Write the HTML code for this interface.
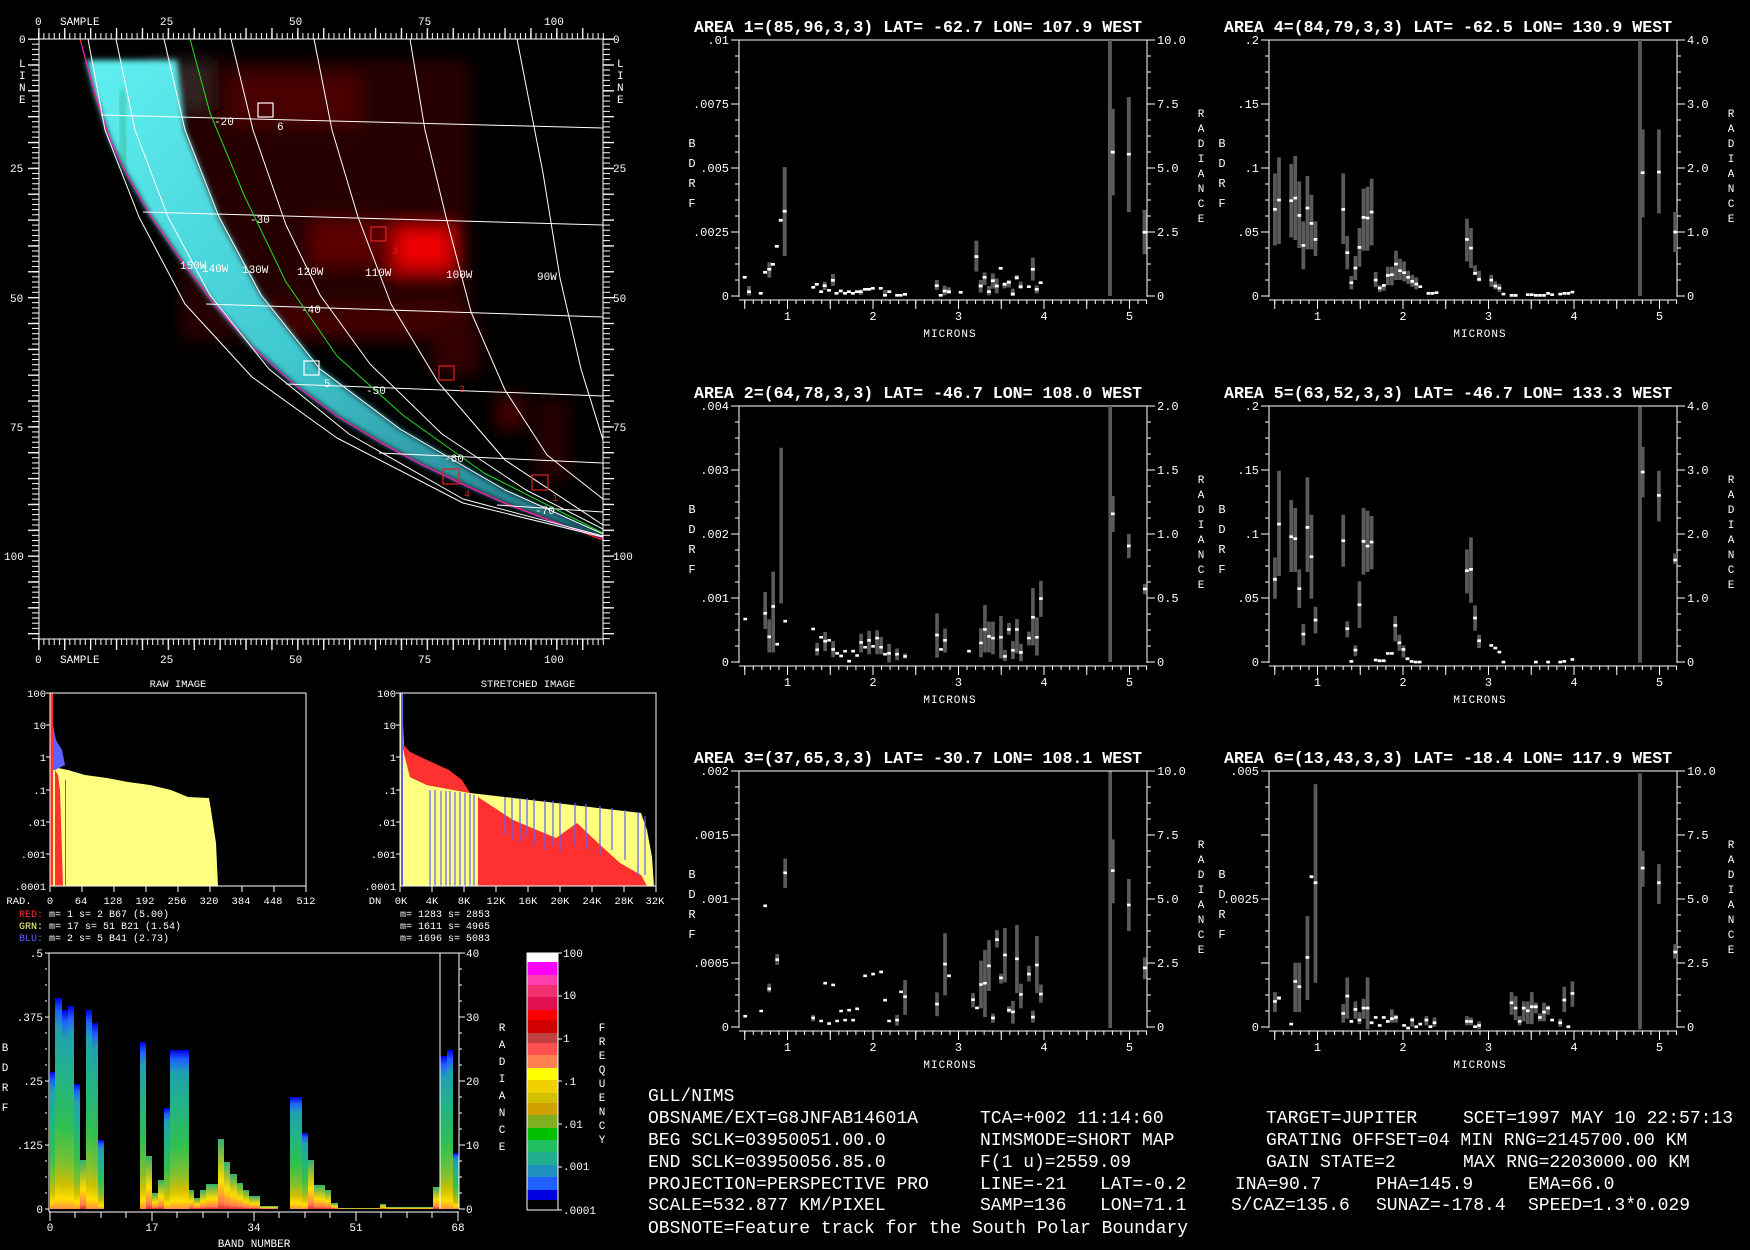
<!DOCTYPE html>
<html><head><meta charset="utf-8"><style>
html,body{margin:0;padding:0;background:#000;}
svg{display:block}
text{font-family:"Liberation Mono",monospace;fill:#fff}
.t{font-size:12px}
.ti{font-size:16.6px;font-weight:bold}
.b{font-size:18px}
</style></head><body>
<svg width="1750" height="1250" viewBox="0 0 1750 1250" xmlns="http://www.w3.org/2000/svg">
<defs>
<filter id="bl" x="-20%" y="-20%" width="140%" height="140%"><feGaussianBlur stdDeviation="8"/></filter>
<filter id="bl2"><feGaussianBlur stdDeviation="3"/></filter>
<clipPath id="mc"><rect x="39" y="39" width="564" height="600"/></clipPath>
<linearGradient id="cy" x1="0" y1="0" x2="1" y2="1"><stop offset="0" stop-color="#60f0f0"/><stop offset=".5" stop-color="#40c8d0"/><stop offset="1" stop-color="#207080"/></linearGradient>
<linearGradient id="gt" x1="0" y1="0" x2="0" y2="1"><stop offset="0" stop-color="#0000e0"/><stop offset=".06" stop-color="#2060ff"/><stop offset=".14" stop-color="#20a0b0"/><stop offset=".3" stop-color="#20b090"/><stop offset=".6" stop-color="#30c050"/><stop offset=".78" stop-color="#80c030"/><stop offset=".88" stop-color="#d0c000"/><stop offset=".95" stop-color="#ffe000"/><stop offset="1" stop-color="#ff9040"/></linearGradient>
<linearGradient id="gs" x1="0" y1="0" x2="0" y2="1"><stop offset="0" stop-color="#30b070"/><stop offset=".3" stop-color="#a0c030"/><stop offset=".6" stop-color="#ffe000"/><stop offset=".9" stop-color="#ff8050"/><stop offset="1" stop-color="#e03030"/></linearGradient>
<pattern id="xt" patternUnits="userSpaceOnUse" x="5.25" y="260" width="8.55" height="10"><rect width="1" height="4" fill="#fff"/></pattern>
<pattern id="xT" patternUnits="userSpaceOnUse" x="5.25" y="260" width="42.75" height="10"><rect width="1" height="9" fill="#fff"/></pattern>
<pattern id="yl" patternUnits="userSpaceOnUse" x="-4" y="-0.5" width="10" height="16"><rect width="4" height="1" fill="#fff"/></pattern>
<pattern id="yL" patternUnits="userSpaceOnUse" x="-8" y="-0.5" width="10" height="64"><rect width="8" height="1" fill="#fff"/></pattern>
<pattern id="yr" patternUnits="userSpaceOnUse" x="408" y="-0.5" width="10" height="16"><rect width="4" height="1" fill="#fff"/></pattern>
<pattern id="yR" patternUnits="userSpaceOnUse" x="408" y="-0.5" width="10" height="64"><rect width="8" height="1" fill="#fff"/></pattern>
<pattern id="mtx" patternUnits="userSpaceOnUse" x="38.2" y="0" width="5.18" height="10"><rect width="1" height="10" fill="#fff"/></pattern>
<pattern id="mTx" patternUnits="userSpaceOnUse" x="38.2" y="0" width="25.9" height="20"><rect width="1.3" height="20" fill="#fff"/></pattern>
<pattern id="mty" patternUnits="userSpaceOnUse" x="0" y="38.5" width="10" height="5.17"><rect width="10" height="1" fill="#fff"/></pattern>
<pattern id="mTy" patternUnits="userSpaceOnUse" x="0" y="38.5" width="20" height="25.85"><rect width="20" height="1.3" fill="#fff"/></pattern>
<g id="pf">
<path d="M0 257V0H408V257M0 260H408" stroke="#fff" fill="none"/>
<rect x="5" y="260" width="404" height="4" fill="url(#xt)"/>
<rect x="5" y="260" width="404" height="9" fill="url(#xT)"/>
<rect x="-4" y="-0.5" width="4" height="258" fill="url(#yl)"/>
<rect x="-8" y="-0.5" width="8" height="258" fill="url(#yL)"/>
<rect x="408" y="-0.5" width="4" height="258" fill="url(#yr)"/>
<rect x="408" y="-0.5" width="8" height="258" fill="url(#yR)"/>
<g class="t" text-anchor="middle"><text x="48.5" y="280">1</text><text x="134" y="280">2</text><text x="219.5" y="280">3</text><text x="305" y="280">4</text><text x="390.5" y="280">5</text>
<text x="211" y="297" style="font-size:11px;letter-spacing:1px">MICRONS</text>
<text x="-47" y="107">B</text><text x="-47" y="127">D</text><text x="-47" y="147">R</text><text x="-47" y="167">F</text>
<text x="462" y="77" style="font-size:11px">R</text><text x="462" y="92" style="font-size:11px">A</text><text x="462" y="107" style="font-size:11px">D</text><text x="462" y="122" style="font-size:11px">I</text><text x="462" y="137" style="font-size:11px">A</text><text x="462" y="152" style="font-size:11px">N</text><text x="462" y="167" style="font-size:11px">C</text><text x="462" y="182" style="font-size:11px">E</text></g>
</g>
</defs>
<rect width="1750" height="1250" fill="#000"/>

<!-- MAP -->
<g clip-path="url(#mc)">
<g filter="url(#bl)">
<rect x="180" y="60" width="290" height="280" fill="#280000"/>
<rect x="230" y="75" width="130" height="50" fill="#4a0000"/>
<rect x="310" y="220" width="75" height="45" fill="#5a0000"/>
<rect x="390" y="225" width="65" height="50" fill="#b00000"/>
<rect x="400" y="232" width="48" height="32" fill="#f00000"/>
<rect x="270" y="305" width="200" height="35" fill="#400000"/>
<rect x="430" y="320" width="50" height="55" fill="#300000"/>
<rect x="495" y="395" width="30" height="35" fill="#400000"/>
<rect x="535" y="400" width="35" height="80" fill="#250000"/>
<rect x="150" y="60" width="60" height="50" fill="#302020"/>
</g>
<polygon filter="url(#bl2)" fill="url(#cy)" points="86,60 95,95 110,140 126,173 150,215 181,260 215,305 252,347 295,385 337,416 380,442 421,464 465,485 505,503 555,522 603,538 603,534 505,490 400,429 320,369 261,295 219,217 185,130 177,60"/>
<polygon filter="url(#bl2)" fill="#20a060" opacity=".6" points="120,90 124,90 126,170 122,170"/>
<g fill="none" stroke-linejoin="round">
<path d="M80 39L95 95 110 140 126 173 150 215 181 260 215 305 252 347 295 385 337 416 380 442 421 464 465 485 505 503 555 522 603 540" stroke="#ff2020" stroke-width="1.2"/>
<path d="M82 46L96 97 111 142 127 175 151 217 182 262 216 306 253 348 296 386 338 417 381 443 422 465 466 486 506 504 556 523 603 538" stroke="#e020e0"/>
<g stroke="#fff" stroke-width="1">
<path d="M517 39L543 173 560 278 581 369 603 440"/>
<path d="M410 39L425 130 446 217 471 312 505 390 547 455 603 499"/>
<path d="M314 39L332 130 358 217 391 304 438 382 505 460 603 525"/>
<path d="M231 39L253 130 286 225 320 295 370 364 442 434 526 490 603 529"/>
<path d="M164 39L185 130 219 217 261 295 320 369 400 429 505 490 603 534"/>
<path d="M116 39L135 130 168 217 210 295 269 369 349 434 463 499 603 536"/>
<path d="M88 39L105 130 139 217 185 304 252 377 337 438 463 503 603 537"/>
<path d="M101 115L603 128M143 212L603 225M206 304L603 317M286 384L603 396M379 453L603 463M497 505L603 512"/>
</g>
<path d="M190 39L210 113 244 195 286 282 337 356 404 416 484 473 603 533" stroke="#20e020"/>
</g>
<g class="t" style="font-size:11px">
<text x="214" y="125">-20</text><text x="250" y="223">-30</text><text x="301" y="313">-40</text><text x="366" y="394">-50</text><text x="444" y="462">-60</text><text x="535" y="514">-70</text>
<text x="180" y="269">150W</text><text x="202" y="272">140W</text><text x="242" y="273">130W</text><text x="297" y="275">120W</text><text x="365" y="276">110W</text><text x="446" y="278">100W</text><text x="537" y="280">90W</text>
<text x="277" y="130">6</text><text x="324" y="387">5</text>
</g>
<g fill="none" stroke-width="1.2">
<rect x="258" y="103" width="15" height="14" stroke="#fff"/>
<rect x="304" y="361" width="15" height="14" stroke="#fff"/>
<rect x="371" y="227" width="15" height="14" stroke="#e02020"/>
<rect x="439" y="366" width="15" height="14" stroke="#e02020"/>
<rect x="443" y="469" width="16" height="15" stroke="#e02020"/>
<rect x="532" y="475" width="16" height="15" stroke="#e02020"/>
</g>
<g class="t" style="font-size:10px"><text x="392" y="254" style="fill:#e02020">3</text><text x="459" y="392" style="fill:#e02020">2</text><text x="464" y="497" style="fill:#e02020">4</text><text x="552" y="501" style="fill:#e02020">1</text></g>
</g>
<rect x="39" y="39" width="564" height="600" fill="none" stroke="#fff"/>
<rect x="38" y="33" width="566" height="6" fill="url(#mtx)"/>
<rect x="38" y="28" width="566" height="11" fill="url(#mTx)"/>
<rect x="38" y="639" width="566" height="6" fill="url(#mtx)"/>
<rect x="38" y="639" width="566" height="11" fill="url(#mTx)"/>
<rect x="32" y="38" width="7" height="602" fill="url(#mty)"/>
<rect x="603" y="38" width="7" height="602" fill="url(#mty)"/>
<rect x="603" y="38" width="11" height="602" fill="url(#mTy)"/>
<rect x="28" y="38" width="11" height="602" fill="url(#mTy)"/>
<g class="t" style="font-size:11px">
<text x="35" y="25">0</text><text x="60" y="25">SAMPLE</text><text x="160" y="25">25</text><text x="289" y="25">50</text><text x="418" y="25">75</text><text x="544" y="25">100</text>
<text x="35" y="663">0</text><text x="60" y="663">SAMPLE</text><text x="160" y="663">25</text><text x="289" y="663">50</text><text x="418" y="663">75</text><text x="544" y="663">100</text>
<text x="19" y="43">0</text><text x="10" y="172">25</text><text x="10" y="302">50</text><text x="10" y="431">75</text><text x="4" y="560">100</text>
<text x="613" y="43">0</text><text x="613" y="172">25</text><text x="613" y="302">50</text><text x="613" y="431">75</text><text x="613" y="560">100</text>
<text x="19" y="67">L</text><text x="19" y="79">I</text><text x="19" y="91">N</text><text x="19" y="103">E</text>
<text x="617" y="67">L</text><text x="617" y="79">I</text><text x="617" y="91">N</text><text x="617" y="103">E</text>
</g>

<!-- HISTOGRAMS -->
<g class="t" style="font-size:10.5px" text-anchor="middle"><text x="178" y="687">RAW IMAGE</text><text x="528" y="687">STRETCHED IMAGE</text></g>
<polygon fill="#ffff80" points="50,693 53,730 53,767 68,770 85,775 107,778 128,782 150,785 171,790 188,797 209,798 211,810 216,843 218,886 50,886"/>
<polygon fill="#6060ff" points="52,720 56,740 62,750 65,765 55,770 52,770"/>
<rect x="50" y="693" width="3" height="193" fill="#ff3030"/>
<polygon fill="#ff3030" points="55,770 58,775 60,790 63,886 55,886"/>
<rect x="65" y="780" width="1" height="106" fill="#6060ff"/>
<rect x="50" y="693" width="256" height="193" fill="none" stroke="#fff"/>
<polygon fill="#ffff80" points="400,693 402,693 404,753 410,777 427,785 470,793 513,798 556,803 598,808 641,813 647,830 652,857 654,886 400,886"/>
<polygon fill="#ff3030" points="402,743 410,752 427,760 449,770 462,780 470,793 427,785 410,777 404,753"/>
<polygon fill="#ff3030" points="478,797 513,820 556,838 577,823 598,843 620,863 641,875 647,886 478,886"/>
<rect x="401" y="693" width="2" height="193" fill="#6060ff"/>
<g stroke="#6060ff" stroke-width="1.2"><path d="M430 790V886M435 790V886M441 791V886M446 791V886M450 791V886M455 792V886M460 792V886M465 793V886M470 794V886M474 795V886M505 797V835M512 797V840M520 798V842M527 798V836M534 799V845M545 800V850M553 801V846M560 802V852M575 803V845M586 804V850M600 806V855M612 808V850M625 810V860M638 812V875M645 816V875"/></g>
<rect x="400" y="693" width="256" height="193" fill="none" stroke="#fff"/>
<g class="t" style="font-size:10.5px" text-anchor="end">
<text x="46" y="697">100</text><text x="46" y="729">10</text><text x="46" y="761">1</text><text x="46" y="794">.1</text><text x="46" y="826">.01</text><text x="46" y="858">.001</text><text x="46" y="890">.0001</text>
<text x="396" y="697">100</text><text x="396" y="729">10</text><text x="396" y="761">1</text><text x="396" y="794">.1</text><text x="396" y="826">.01</text><text x="396" y="858">.001</text><text x="396" y="890">.0001</text>
</g>
<path d="M50 886v6M82 886v6M114 886v6M146 886v6M178 886v6M210 886v6M242 886v6M274 886v6M306 886v6M400 886v6M432 886v6M464 886v6M496 886v6M528 886v6M560 886v6M592 886v6M624 886v6M656 886v6M46 693h4M46 725h4M46 757h4M46 790h4M46 822h4M46 854h4M396 693h4M396 725h4M396 757h4M396 790h4M396 822h4M396 854h4" stroke="#fff"/>
<g class="t" style="font-size:10.5px" text-anchor="middle">
<text x="19" y="904">RAD.</text><text x="50" y="904">0</text><text x="81" y="904">64</text><text x="113" y="904">128</text><text x="145" y="904">192</text><text x="177" y="904">256</text><text x="209" y="904">320</text><text x="241" y="904">384</text><text x="273" y="904">448</text><text x="306" y="904">512</text>
<text x="375" y="904">DN</text><text x="401" y="904">0K</text><text x="432" y="904">4K</text><text x="464" y="904">8K</text><text x="496" y="904">12K</text><text x="528" y="904">16K</text><text x="560" y="904">20K</text><text x="592" y="904">24K</text><text x="624" y="904">28K</text><text x="655" y="904">32K</text>
</g>
<g class="t" style="font-size:10px" xml:space="preserve">
<text x="19" y="917"><tspan style="fill:#ff3030">RED:</tspan> m=    1 s=    2 B67 (5.00)</text>
<text x="19" y="929"><tspan style="fill:#ffff80">GRN:</tspan> m=   17 s=   51 B21 (1.54)</text>
<text x="19" y="941"><tspan style="fill:#6060ff">BLU:</tspan> m=    2 s=    5 B41 (2.73)</text>
<text x="400" y="917">m= 1283 s= 2853</text><text x="400" y="929">m= 1611 s= 4965</text><text x="400" y="941">m= 1696 s= 5083</text>
</g>

<!-- BAND CHART -->
<g fill="url(#gt)">
<rect x="50" y="1072" width="5" height="137"/><rect x="55" y="998" width="7" height="211"/><rect x="62" y="1010" width="6" height="199"/><rect x="68" y="1006" width="6" height="203"/><rect x="74" y="1084" width="6" height="125"/><rect x="86" y="1010" width="6" height="199"/><rect x="92" y="1023" width="6" height="186"/><rect x="98" y="1140" width="6" height="69"/>
<rect x="140" y="1042" width="6" height="167"/><rect x="164" y="1108" width="6" height="101"/><rect x="170" y="1050" width="19" height="159"/><rect x="290" y="1097" width="12" height="112"/><rect x="302" y="1133" width="6" height="76"/><rect x="440" y="1056" width="7" height="153"/><rect x="447" y="1050" width="6" height="159"/><rect x="453" y="1153" width="6" height="56"/>
</g>
<g fill="url(#gs)">
<rect x="80" y="1160" width="6" height="49"/><rect x="146" y="1156" width="6" height="53"/><rect x="152" y="1193" width="6" height="16"/><rect x="158" y="1180" width="6" height="29"/><rect x="189" y="1190" width="5" height="19"/><rect x="194" y="1198" width="6" height="11"/><rect x="200" y="1190" width="6" height="19"/><rect x="206" y="1184" width="12" height="25"/><rect x="218" y="1139" width="6" height="70"/><rect x="224" y="1162" width="6" height="47"/><rect x="230" y="1174" width="7" height="35"/><rect x="237" y="1183" width="6" height="26"/><rect x="243" y="1190" width="6" height="19"/><rect x="249" y="1196" width="11" height="13"/><rect x="260" y="1206" width="18" height="3"/><rect x="308" y="1160" width="6" height="49"/><rect x="314" y="1185" width="11" height="24"/><rect x="325" y="1190" width="6" height="19"/><rect x="331" y="1203" width="7" height="6"/><rect x="338" y="1208" width="42" height="1"/><rect x="380" y="1204" width="6" height="5"/><rect x="386" y="1207" width="47" height="2"/><rect x="433" y="1187" width="7" height="22"/>
</g>
<path d="M49 953H459M440 953V1209M459 953V1209M49 953V1212M49 1212H459" stroke="#fff" fill="none"/>
<path d="M45 953h4M45 1017h4M45 1081h4M45 1145h4M45 1209h4M45 969h2M45 985h2M45 1001h2M45 1033h2M45 1049h2M45 1065h2M45 1097h2M45 1113h2M45 1129h2M45 1161h2M45 1177h2M45 1193h2M459 953h6M459 1017h6M459 1081h6M459 1145h6M459 1209h6M459 969h3M459 985h3M459 1001h3M459 1033h3M459 1049h3M459 1065h3M459 1097h3M459 1113h3M459 1129h3M459 1161h3M459 1177h3M459 1193h3M50 1212v9M75 1212v6M101 1212v6M126 1212v6M152 1212v9M177 1212v6M203 1212v6M228 1212v6M254 1212v9M279 1212v6M305 1212v6M330 1212v6M356 1212v9M381 1212v6M407 1212v6M432 1212v6M458 1212v9" stroke="#fff"/>
<g class="t" style="font-size:11px">
<g text-anchor="end"><text x="43" y="957">.5</text><text x="43" y="1021">.375</text><text x="43" y="1085">.25</text><text x="43" y="1149">.125</text><text x="43" y="1213">0</text></g>
<text x="466" y="957">40</text><text x="466" y="1021">30</text><text x="466" y="1085">20</text><text x="466" y="1149">10</text><text x="466" y="1213">0</text>
<g text-anchor="middle"><text x="50" y="1231">0</text><text x="152" y="1231">17</text><text x="254" y="1231">34</text><text x="356" y="1231">51</text><text x="458" y="1231">68</text><text x="254" y="1247">BAND NUMBER</text>
<text x="5" y="1051">B</text><text x="5" y="1071">D</text><text x="5" y="1091">R</text><text x="5" y="1111">F</text>
<text x="502" y="1031">R</text><text x="502" y="1048">A</text><text x="502" y="1065">D</text><text x="502" y="1082">I</text><text x="502" y="1099">A</text><text x="502" y="1116">N</text><text x="502" y="1133">C</text><text x="502" y="1150">E</text>
<text x="602" y="1031">F</text><text x="602" y="1045">R</text><text x="602" y="1059">E</text><text x="602" y="1073">Q</text><text x="602" y="1087">U</text><text x="602" y="1101">E</text><text x="602" y="1115">N</text><text x="602" y="1129">C</text><text x="602" y="1143">Y</text></g>
<text x="563" y="957">100</text><text x="563" y="999">10</text><text x="563" y="1042">1</text><text x="563" y="1085">.1</text><text x="563" y="1128">.01</text><text x="563" y="1170">.001</text><text x="563" y="1214">.0001</text>
</g>
<g>
<rect x="527" y="953" width="31" height="9" fill="#fff"/><rect x="527" y="962" width="31" height="13" fill="#ff00ff"/><rect x="527" y="975" width="31" height="10" fill="#ff40b0"/><rect x="527" y="985" width="31" height="12" fill="#f03070"/><rect x="527" y="997" width="31" height="13" fill="#e01050"/><rect x="527" y="1010" width="31" height="10" fill="#ff0000"/><rect x="527" y="1020" width="31" height="13" fill="#d00000"/><rect x="527" y="1033" width="31" height="10" fill="#c04040"/><rect x="527" y="1043" width="31" height="12" fill="#ff5050"/><rect x="527" y="1055" width="31" height="13" fill="#ff8050"/><rect x="527" y="1068" width="31" height="12" fill="#ffff00"/><rect x="527" y="1080" width="31" height="13" fill="#f0d000"/><rect x="527" y="1093" width="31" height="10" fill="#d0c000"/><rect x="527" y="1103" width="31" height="12" fill="#d0a000"/><rect x="527" y="1115" width="31" height="13" fill="#80b020"/><rect x="527" y="1128" width="31" height="12" fill="#00c000"/><rect x="527" y="1140" width="31" height="12" fill="#20c060"/><rect x="527" y="1152" width="31" height="13" fill="#20b090"/><rect x="527" y="1165" width="31" height="12" fill="#2090c0"/><rect x="527" y="1177" width="31" height="13" fill="#2060ff"/><rect x="527" y="1190" width="31" height="10" fill="#0000e0"/><rect x="527" y="1200" width="31" height="10" fill="#000"/>
<rect x="527" y="953" width="31" height="257" fill="none" stroke="#fff"/>
<path d="M558 953h4M558 996h4M558 1039h4M558 1081h4M558 1124h4M558 1167h4M558 1210h4" stroke="#fff"/>
</g>

<!-- SPECTRUM PANELS -->
<use href="#pf" x="739" y="40"/><use href="#pf" x="739" y="406"/><use href="#pf" x="739" y="771"/>
<use href="#pf" x="1269" y="40"/><use href="#pf" x="1269" y="406"/><use href="#pf" x="1269" y="771"/>
<g class="ti">
<text x="694" y="32">AREA 1=(85,96,3,3) LAT= -62.7 LON= 107.9 WEST</text>
<text x="694" y="398">AREA 2=(64,78,3,3) LAT= -46.7 LON= 108.0 WEST</text>
<text x="694" y="763">AREA 3=(37,65,3,3) LAT= -30.7 LON= 108.1 WEST</text>
<text x="1224" y="32">AREA 4=(84,79,3,3) LAT= -62.5 LON= 130.9 WEST</text>
<text x="1224" y="398">AREA 5=(63,52,3,3) LAT= -46.7 LON= 133.3 WEST</text>
<text x="1224" y="763">AREA 6=(13,43,3,3) LAT= -18.4 LON= 117.9 WEST</text>
</g>
<g class="t" text-anchor="end">
<text x="729" y="44">.01</text><text x="729" y="108">.0075</text><text x="729" y="172">.005</text><text x="729" y="236">.0025</text><text x="729" y="300">0</text>
<text x="729" y="410">.004</text><text x="729" y="474">.003</text><text x="729" y="538">.002</text><text x="729" y="602">.001</text><text x="729" y="666">0</text>
<text x="729" y="775">.002</text><text x="729" y="839">.0015</text><text x="729" y="903">.001</text><text x="729" y="967">.0005</text><text x="729" y="1031">0</text>
<text x="1259" y="44">.2</text><text x="1259" y="108">.15</text><text x="1259" y="172">.1</text><text x="1259" y="236">.05</text><text x="1259" y="300">0</text>
<text x="1259" y="410">.2</text><text x="1259" y="474">.15</text><text x="1259" y="538">.1</text><text x="1259" y="602">.05</text><text x="1259" y="666">0</text>
<text x="1259" y="775">.005</text><text x="1259" y="903">.0025</text><text x="1259" y="1031">0</text>
</g>
<g class="t">
<text x="1157" y="44">10.0</text><text x="1157" y="108">7.5</text><text x="1157" y="172">5.0</text><text x="1157" y="236">2.5</text><text x="1157" y="300">0</text>
<text x="1157" y="410">2.0</text><text x="1157" y="474">1.5</text><text x="1157" y="538">1.0</text><text x="1157" y="602">0.5</text><text x="1157" y="666">0</text>
<text x="1157" y="775">10.0</text><text x="1157" y="839">7.5</text><text x="1157" y="903">5.0</text><text x="1157" y="967">2.5</text><text x="1157" y="1031">0</text>
<text x="1687" y="44">4.0</text><text x="1687" y="108">3.0</text><text x="1687" y="172">2.0</text><text x="1687" y="236">1.0</text><text x="1687" y="300">0</text>
<text x="1687" y="410">4.0</text><text x="1687" y="474">3.0</text><text x="1687" y="538">2.0</text><text x="1687" y="602">1.0</text><text x="1687" y="666">0</text>
<text x="1687" y="775">10.0</text><text x="1687" y="839">7.5</text><text x="1687" y="903">5.0</text><text x="1687" y="967">2.5</text><text x="1687" y="1031">0</text>
</g>

<g transform="matrix(0.357 0 0 0.3338 640.1 -0.4)" fill="none" stroke-width="11">
<path stroke="#5a5a5a" d="M305 858V886M362 787V833M405 502V768M517 845V870M540 822V858M618 868V885M686 870V886M831 840V870M853 857V886M865 862V882M942 722V815M954 840V878M965 817V855M977 858V886M988 820V866M999 835V880M1021 847V865M1033 840V862M1044 866V888M1055 825V840M1066 845V867M1100 773V842M1111 856V880M1316 121V888M1324 327V587M1369 292V637M1413 630V763"/>
<path stroke="#fff" d="M293 828v8M305 871v8M338 876v8M350 813v8M362 804v8M372 789v8M383 735v8M394 657v8M405 630v8M485 858v8M495 849v8M507 871v8M517 853v8M529 867v8M540 837v8M550 876v8M562 869v8M574 876v8M585 871v8M596 876v8M607 871v8M618 871v8M630 864v8M641 864v8M652 861v8M674 861v8M686 882v8M698 871v8M720 882v8M730 882v8M742 879v8M831 853v8M842 882v8M853 869v8M865 871v8M898 873v8M942 766v8M954 854v8M965 828v8M977 871v8M988 838v8M999 854v8M1010 801v8M1021 849v8M1033 843v8M1044 878v8M1055 829v8M1066 856v8M1089 856v8M1100 804v8M1111 864v8M1122 844v8M1324 453v8M1369 459v8M1413 693v8"/>
</g>
<g transform="matrix(0.333 0 0 0.4346 690.6 380.4)" fill="none" stroke-width="11">
<path stroke="#5a5a5a" d="M224 487V572M236 550V626M248 440V626M272 155V513M380 604V633M404 579V623M428 600V637M512 583V626M536 576V630M560 575V630M572 590V630M596 606V649M620 617V644M644 628V640M740 536V638M764 571V626M872 570V637M884 517V626M896 555V626M908 555V630M932 542V640M944 620V646M956 558V585M968 600V641M980 549V628M992 606V646M1016 578V610M1028 478V610M1040 545V633M1052 461V544M1260 59V648M1268 266V349M1316 353V409M1364 468V492
M236 1388V1408M260 1320V1345M284 1100V1168M368 1460V1475M620 1460V1485M644 1380V1460M740 1408V1463M764 1272V1415M848 1410V1443M872 1335V1445M884 1310V1465M896 1288V1405M908 1457V1478M920 1265V1305M932 1365V1388M944 1260V1385M956 1440V1455M968 1428V1480M980 1253V1410M992 1388V1445M1016 1347V1383M1028 1450V1478M1040 1278V1410M1052 1390V1432M1260 900V1490M1268 1056V1203M1316 1147V1267M1364 1328V1378"/>
<path stroke="#fff" d="M164 546v6M224 533v6M236 587v6M248 517v6M260 604v6M284 551v6M368 569v6M380 617v6M392 588v6M404 597v6M416 595v6M428 616v6M440 625v6M452 631v6M464 620v6M476 643v6M488 620v6M500 630v6M512 600v6M524 611v6M536 595v6M548 609v6M560 590v6M572 611v6M584 627v6M596 625v6M620 627v6M644 632v6M740 583v6M752 616v6M764 595v6M836 620v6M872 601v6M884 570v6M896 586v6M908 590v6M932 588v6M944 632v6M956 570v6M968 618v6M980 570v6M992 623v6M1016 590v6M1028 542v6M1040 588v6M1052 499v6M1268 304v6M1316 378v6M1364 477v6
M164 1460v6M212 1448v6M224 1206v6M236 1397v6M260 1330v6M284 1130v6M368 1464v6M392 1471v6M404 1384v6M416 1477v6M428 1388v6M440 1471v6M452 1448v6M464 1469v6M476 1446v6M488 1469v6M500 1443v6M524 1367v6M548 1363v6M572 1358v6M584 1423v6M596 1471v6M620 1469v6M632 1404v6M644 1415v6M740 1432v6M764 1340v6M776 1367v6M848 1422v6M860 1441v6M872 1387v6M884 1384v6M896 1344v6M908 1464v6M920 1284v6M932 1372v6M944 1319v6M956 1446v6M968 1450v6M980 1328v6M992 1410v6M1016 1363v6M1028 1462v6M1040 1342v6M1052 1409v6M1268 1125v6M1316 1204v6M1364 1349v6"/>
</g>
<g transform="matrix(0.338 0 0 0.6667 1220.2 18.7)" fill="none" stroke-width="11">
<path stroke="#5a5a5a" d="M162 232V340M174 208V338M210 218V328M222 206V332M234 244V344M246 304V376M258 236V346M270 264V346M282 304V356M364 232V338M376 326V376M388 386V406M400 356V392M412 314V372M424 255V348M436 252V348M448 240V340M460 380V402M472 400V410M484 398V408M496 372V400M508 372V400M520 348V392M532 360V392M544 364V394M556 378V398M568 384V402M580 388V406M730 300V364M742 314V374M754 370V384M766 378V394M802 384V402M814 394V406M826 398V410M1242 32V416M1250 166V298M1298 166V292M1346 290V350
M162 808V870M174 678V836M210 722V830M222 734V830M234 826V884M246 908V940M258 688V830M270 744V870M282 882V922M364 744V822M376 904V928M400 940V956M412 844V914M424 734V834M436 738V830M448 746V826M518 896V934M530 924V948M542 940V958M730 796V862M742 778V876M754 880V918M766 924V944M1242 582V966M1250 642V718M1298 678V754M1346 802V818
M162 1460V1490M174 1466V1472M222 1416V1490M234 1416V1490M258 1346V1472M282 1148V1446M364 1478V1506M376 1438V1500M400 1474V1500M412 1490V1508M424 1470V1500M436 1438V1516M508 1486V1506M520 1494V1506M568 1498V1512M610 1496V1510M634 1498V1512M730 1496V1510M742 1498V1510M766 1504V1516M862 1460V1494M874 1466V1502M886 1496V1510M898 1474V1504M910 1474V1508M922 1460V1508M934 1476V1492M946 1492V1504M958 1476V1504M970 1480V1494M1006 1500V1512M1018 1452V1490M1042 1444V1482M1242 1132V1516M1250 1248V1302M1298 1268V1328M1346 1388V1410"/>
<path stroke="#fff" d="M162 284v4M174 270v4M210 271v4M222 267v4M234 293v4M246 338v4M258 282v4M270 305v4M282 329v4M364 284v4M376 349v4M388 394v4M400 372v4M412 341v4M424 296v4M436 297v4M448 288v4M460 390v4M472 402v4M484 398v4M496 383v4M508 382v4M520 366v4M532 376v4M544 379v4M556 386v4M568 392v4M580 396v4M592 400v4M616 410v4M628 410v4M640 409v4M730 329v4M742 342v4M754 380v4M766 389v4M802 390v4M814 399v4M826 402v4M838 411v4M862 413v4M874 413v4M910 412v4M922 412v4M934 413v4M946 413v4M958 413v4M970 410v4M982 412v4M1006 411v4M1018 410v4M1030 410v4M1042 408v4M1250 229v4M1298 228v4M1346 318v4
M162 839v4M174 756v4M210 775v4M222 778v4M234 853v4M246 921v4M258 761v4M270 805v4M282 900v4M364 781v4M376 913v4M388 962v4M400 945v4M412 877v4M424 782v4M436 789v4M448 783v4M460 960v4M472 961v4M484 961v4M496 950v4M508 950v4M518 908v4M530 934v4M542 944v4M554 958v4M566 962v4M578 963v4M590 963v4M730 826v4M742 824v4M754 897v4M766 931v4M802 938v4M814 942v4M826 948v4M838 963v4M934 963v4M970 963v4M1006 963v4M1018 962v4M1042 959v4M1250 678v4M1298 713v4M1346 810v4
M162 1472v4M174 1467v4M210 1506v4M222 1442v4M234 1450v4M258 1406v4M270 1285v4M282 1294v4M364 1490v4M376 1464v4M388 1502v4M400 1484v4M412 1500v4M424 1482v4M436 1482v4M448 1504v4M460 1496v4M472 1508v4M484 1496v4M496 1502v4M508 1498v4M520 1496v4M544 1508v4M556 1512v4M568 1500v4M580 1510v4M592 1506v4M610 1500v4M622 1510v4M634 1504v4M730 1502v4M742 1502v4M754 1510v4M766 1508v4M862 1474v4M874 1482v4M886 1502v4M898 1482v4M910 1486v4M922 1480v4M934 1480v4M946 1496v4M958 1488v4M970 1482v4M982 1500v4M1006 1504v4M1018 1470v4M1030 1510v4M1042 1460v4M1250 1272v4M1298 1294v4M1346 1398v4"/>
</g>

<g class="b" xml:space="preserve">
<text x="648" y="1101">GLL/NIMS</text>
<text x="648" y="1123">OBSNAME/EXT=G8JNFAB14601A</text><text x="980" y="1123">TCA=+002 11:14:60</text><text x="1266" y="1123">TARGET=JUPITER</text><text x="1463" y="1123">SCET=1997 MAY 10 22:57:13</text>
<text x="648" y="1145">BEG SCLK=03950051.00.0</text><text x="980" y="1145">NIMSMODE=SHORT MAP</text><text x="1266" y="1145">GRATING OFFSET=04 MIN RNG=2145700.00 KM</text>
<text x="648" y="1167">END SCLK=03950056.85.0</text><text x="980" y="1167">F(1 u)=2559.09</text><text x="1266" y="1167">GAIN STATE=2</text><text x="1463" y="1167">MAX RNG=2203000.00 KM</text>
<text x="648" y="1189">PROJECTION=PERSPECTIVE PRO</text><text x="980" y="1189">LINE=-21</text><text x="1100" y="1189">LAT=-0.2</text><text x="1235" y="1189">INA=90.7</text><text x="1376" y="1189">PHA=145.9</text><text x="1528" y="1189">EMA=66.0</text>
<text x="648" y="1210">SCALE=532.877 KM/PIXEL</text><text x="980" y="1210">SAMP=136</text><text x="1100" y="1210">LON=71.1</text><text x="1231" y="1210">S/CAZ=135.6</text><text x="1376" y="1210">SUNAZ=-178.4</text><text x="1528" y="1210">SPEED=1.3*0.029</text>
<text x="648" y="1233">OBSNOTE=Feature track for the South Polar Boundary</text>
</g>
</svg>
</body></html>
